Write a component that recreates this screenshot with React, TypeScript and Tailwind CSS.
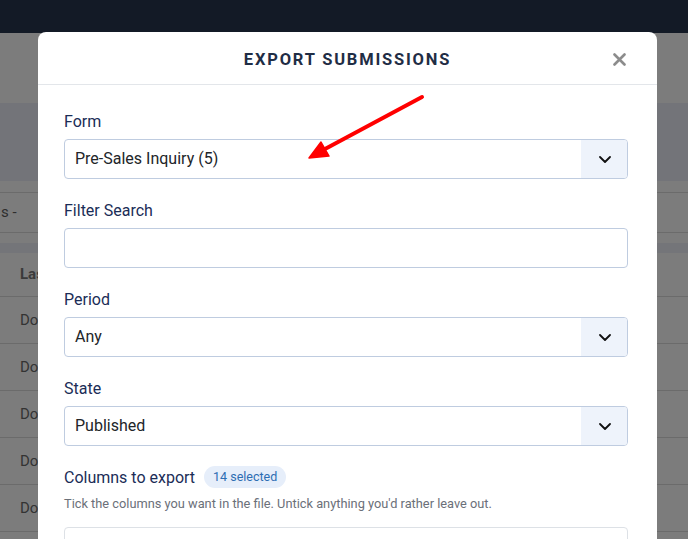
import React from "react";

const ChevronDown = () => (
  <svg width="12" height="7" viewBox="0 0 12 7" fill="none">
    <path d="M1 1l5 5 5-5" stroke="#111" strokeWidth="1.8" strokeLinecap="round" strokeLinejoin="round" />
  </svg>
);

function FieldLabel({ children }: { children: React.ReactNode }) {
  return <div className="text-[16px] leading-[24px] text-[#1b2d57] mb-[5px]">{children}</div>;
}

function SelectField({ label, value, first }: { label: string; value: string; first?: boolean }) {
  return (
    <div className={first ? "" : "mt-[20px]"}>
      <FieldLabel>{label}</FieldLabel>
      <div className="flex h-[40px] rounded-[4px] border border-[#bfcce0] overflow-hidden">
        <div className="flex-1 flex items-center pl-[10px] text-[16px] text-[#222529]">{value}</div>
        <div className="w-[46px] flex items-center justify-center bg-[#eef3fb] pl-[2px]">
          <ChevronDown />
        </div>
      </div>
    </div>
  );
}

function TextField({ label }: { label: string }) {
  return (
    <div className="mt-[20px]">
      <FieldLabel>{label}</FieldLabel>
      <div className="h-[40px] rounded-[4px] border border-[#bfcce0]" />
    </div>
  );
}

const rows = ["Done", "Done", "Done", "Done", "Done"];

export default function App() {
  return (
    <div
      className="relative h-[539px] w-full overflow-hidden bg-[#7c7c7c]"
      style={{ fontFamily: "Roboto, 'Noto Sans', sans-serif" }}
    >
      {/* page behind the dialog, dimmed */}
      <div className="h-[33px] bg-[#131a26]" />
      <div className="h-[70px]" />
      <div className="h-[78px] bg-[#737479]" />
      <div className="h-[11px]" />
      <div className="h-[41px] border-y border-[#6b6b6b] flex items-center text-[15px] text-[#2e2e2e] pl-[1px]">
        s -
      </div>
      <div className="h-[10px]" />
      <div className="h-[10px] bg-[#747579]" />
      <div className="h-[44px] border-b border-[#6b6b6b] flex items-center pl-[20px] text-[15px] font-bold text-[#3a3a3a]">
        Last
      </div>
      {rows.map((r, i) => (
        <div
          key={i}
          className="h-[47px] border-b border-[#6b6b6b] flex items-center pl-[20px] text-[15px] text-[#333333]"
        >
          {r}
        </div>
      ))}

      {/* dialog */}
      <div className="absolute left-[38px] top-[32px] w-[619px] h-[540px] bg-white rounded-t-[8px]">
        <div className="relative h-[53px] border-b border-[#e3e6ea] flex items-center justify-center pt-[4px]">
          <div className="text-[16.5px] font-bold tracking-[1.8px] text-[#1f2d45]">EXPORT SUBMISSIONS</div>
          <svg
            className="absolute right-[31px] top-[21px]"
            width="13"
            height="13"
            viewBox="0 0 13 13"
            fill="none"
          >
            <path d="M1.5 1.5l10 10M11.5 1.5l-10 10" stroke="#8c8c8c" strokeWidth="2.6" strokeLinecap="round" />
          </svg>
        </div>

        <div className="pl-[26px] pr-[29px] pt-[25px]">
          <SelectField first label="Form" value="Pre-Sales Inquiry (5)" />
          <TextField label="Filter Search" />
          <SelectField label="Period" value="Any" />
          <SelectField label="State" value="Published" />

          <div className="mt-[20px] h-[22px] flex items-center">
            <span className="text-[16px] text-[#1b2d57] pt-[1px]">Columns to export</span>
            <span className="ml-[9px] h-[22px] px-[9px] rounded-full bg-[#e6eefa] text-[12.5px] text-[#2d6db3] flex items-center">
              14 selected
            </span>
          </div>
          <div className="mt-[7px] text-[12.8px] leading-[18px] text-[#6b7079]">
            Tick the columns you want in the file. Untick anything you'd rather leave out.
          </div>
          <div className="mt-[14px] h-[80px] rounded-[4px] border border-[#dde1e6]" />
        </div>
      </div>

      {/* annotation arrow */}
      <svg className="absolute left-0 top-0 pointer-events-none" width="688" height="539">
        <line x1="422" y1="97" x2="325" y2="149" stroke="#ff0000" strokeWidth="4" strokeLinecap="round" />
        <polygon points="309,158 321,142 329,156" fill="#ff0000" stroke="#ff0000" strokeWidth="1.5" strokeLinejoin="round" />
      </svg>
    </div>
  );
}
